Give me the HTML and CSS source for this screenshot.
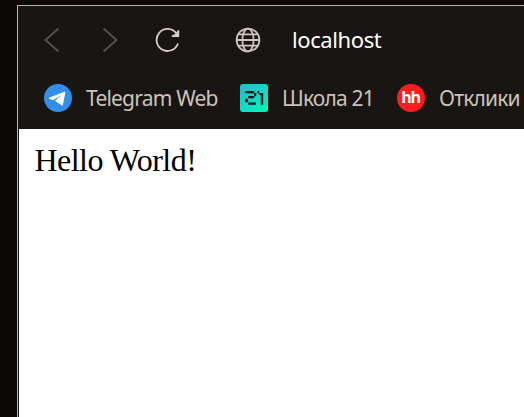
FILE: index.html
```html
<!DOCTYPE html>
<html lang="ru">
<head>
<meta charset="utf-8">
<title>localhost</title>
<link rel="stylesheet" href="styles.css">
</head>
<body>
<div class="window">
  <header class="toolbar">
    <svg class="nav back" width="16" height="26" viewBox="0 0 16 26"><path d="M14.500 1.500 1.500 13l13 11.500"/></svg>
    <svg class="nav forward" width="16" height="26" viewBox="0 0 16 26"><path d="M1.500 1.500 14.500 13l-13 11.500"/></svg>
    <svg class="reload" width="26" height="26" viewBox="0 0 26 26"><path class="line" d="M23 16.500A11 11 0 1 1 21.500 6.500"/><path class="fill" d="M24.200 3v7h-7.400v-1.600l3.400-1.400 2.400-3.500z"/></svg>
    <svg class="globe" width="26" height="26" viewBox="0 0 26 26"><circle cx="13" cy="13" r="11.400"/><ellipse cx="13" cy="13" rx="5.600" ry="11.400"/><path d="M1.600 13h22.800M3.600 7.300h18.800M3.600 18.700h18.800"/></svg>
    <span class="address">localhost</span>
  </header>
  <nav class="bookmarks">
    <a class="bookmark telegram"><svg width="28" height="28" viewBox="0 0 28 28"><circle cx="14" cy="14" r="14" fill="#338eea"/><path d="M5.500 13.600 19.800 8c1-.4 1.600.1 1.400 1.200L19 20.400c-.2 1.100-.9 1.300-1.800.7L11 16.800l6.500-5.700-8.300 5-3.700-1.200c-.8-.3-.8-.9 0-1.300z" fill="#fff"/></svg><span>Telegram Web</span></a>
    <a class="bookmark school"><svg width="28" height="28" viewBox="0 0 28 28"><defs><linearGradient id="mint" x1="0" y1="0" x2=".7" y2="1"><stop offset="0" stop-color="#2eb5cc"/><stop offset="1" stop-color="#05f1be"/></linearGradient></defs><rect width="28" height="28" rx="3" fill="url(#mint)"/><path d="M5.300 7h9v2.200h-9zM14 9h2.200v3.200H14zM8 12h6.200v2.200H8zM5.300 14.800h2.500v3.400H5.300zM8 18.500h8v2.300H8zM17 7h2.200v2.200H17zM20.800 9h2.400v11.800h-2.400zM19 9h2v2h-2z" fill="#131d20"/></svg><span>Школа 21</span></a>
    <a class="bookmark jobs"><span class="hh">hh</span><span>Отклики</span></a>
  </nav>
  <main class="page">Hello World!</main>
</div>
</body>
</html>
```
FILE: styles.css
```css
* { box-sizing: border-box; }
body { margin: 0; height: 417px; padding: 5px 0 0 17px; background: #0a0908; overflow: hidden; }
.window { height: 412px; border: solid #65dfb0; border-width: 1px 0 0 1px; background: #191512; display: flex; flex-direction: column; }
.toolbar { height: 68px; flex: none; display: flex; align-items: center; padding-left: 26px; font-family: "Noto Sans", "Open Sans", sans-serif; }
svg { display: block; flex: none; fill: none; }
.nav { stroke: #59534f; stroke-width: 1.8; }
.forward { margin-left: 42px; }
.reload { margin-left: 37px; }
.reload .line { stroke: #d7cec8; stroke-width: 1.8; }
.reload .fill { fill: #d7cec8; }
.globe { margin-left: 54px; stroke: #cfc5bf; stroke-width: 1.8; }
.address { margin-left: 31px; padding-bottom: 2px; color: #fff; font-size: 22px; letter-spacing: -.4px; white-space: nowrap; }
.bookmarks { height: 55px; flex: none; display: flex; padding: 10px 0 0 26px; font: 21px/28px "Noto Sans", "Open Sans", sans-serif; letter-spacing: -.8px; color: #cbc3bb; }
.bookmark { display: flex; gap: 14px; height: 28px; flex: none; white-space: nowrap; }
.telegram { width: 196px; }
.school { width: 157px; }
.hh { width: 28px; height: 28px; border-radius: 50%; background: #ff1b20; color: #fff; font: bold 16px/27px "Open Sans", sans-serif; text-align: center; text-indent: -1px; letter-spacing: -1.3px; }
.page { flex: 1; margin-left: 1px; padding: 14px 15.5px; background: #fff; color: #000; font: 32px/35px "Liberation Serif", serif; letter-spacing: -.55px; }
```
